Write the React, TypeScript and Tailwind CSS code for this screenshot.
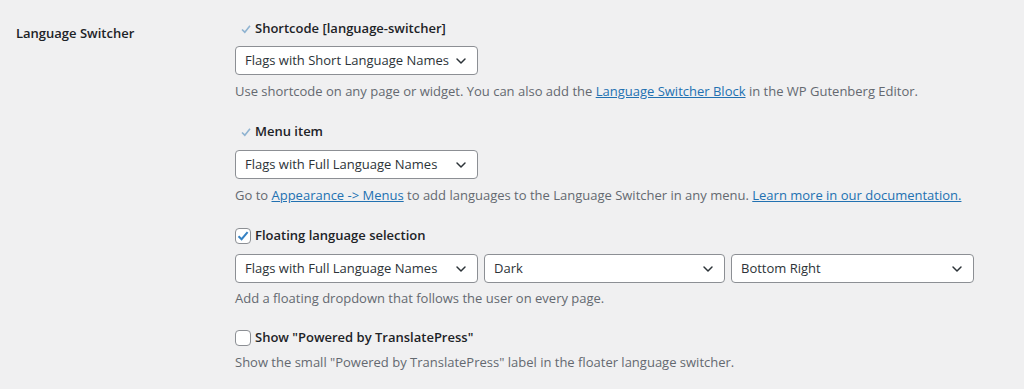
import { ChevronDown } from 'lucide-react';

function Select({ value, width }: { value: string; width: string }) {
  return (
    <div
      className={`${width} h-[29px] bg-white border border-[#8c8f94] rounded-[4px] flex items-center justify-between pl-[9px] pr-[8px] text-[13px] text-[#2c3338] whitespace-nowrap`}
    >
      <span>{value}</span>
      <ChevronDown className="w-4 h-4 text-[#2c3338] shrink-0" strokeWidth={2.2} />
    </div>
  );
}

function Tick() {
  return (
    <svg width="10" height="10" viewBox="0 0 10 10" className="mr-[4px]">
      <path d="M1 5.5 L3.8 8.2 L9 1.8" fill="none" stroke="#8fb3d1" strokeWidth="1.6" />
    </svg>
  );
}

function Checkbox({ checked }: { checked: boolean }) {
  return (
    <span className="w-[16px] h-[16px] mr-[4px] bg-white border border-[#8c8f94] rounded-[4px] flex items-center justify-center">
      {checked && (
        <svg width="14" height="14" viewBox="0 0 14 14">
          <path d="M2.5 7.2 L5.6 10.2 L11.6 3.2" fill="none" stroke="#3582c4" strokeWidth="2" />
        </svg>
      )}
    </span>
  );
}

export default function App() {
  const desc = 'text-[13px] leading-[20px] text-[#646970]';
  const title = 'flex items-center h-[20px] text-[13px] font-semibold text-[#1d2327]';
  const link = 'text-[#2271b1] underline';

  return (
    <div
      className="w-[1024px] h-[389px] bg-[#f0f0f1] flex"
      style={{ fontFamily: '"Open Sans", "Noto Sans", sans-serif' }}
    >
      {/* Label column */}
      <div className="w-[235px] pl-[16px] pt-[23px]">
        <div className="text-[13px] leading-[20px] font-semibold text-[#1d2327]">Language Switcher</div>
      </div>

      {/* Options */}
      <div className="flex-1 pt-[19px]">
        <div className={`${title} pl-[6px]`}>
          <Tick />
          Shortcode [language-switcher]
        </div>
        <div className="mt-[7px]">
          <Select value="Flags with Short Language Names" width="w-[243px]" />
        </div>
        <p className={`${desc} mt-[6px]`}>
          Use shortcode on any page or widget. You can also add the{' '}
          <a className={link}>Language Switcher Block</a> in the WP Gutenberg Editor.
        </p>

        <div className={`${title} pl-[6px] mt-[21px]`}>
          <Tick />
          Menu item
        </div>
        <div className="mt-[8px]">
          <Select value="Flags with Full Language Names" width="w-[243px]" />
        </div>
        <p className={`${desc} mt-[6px]`}>
          Go to <a className={link}>Appearance -&gt; Menus</a> to add languages to the Language Switcher in any menu.{' '}
          <a className={link}>Learn more in our documentation.</a>
        </p>

        <div className={`${title} mt-[21px]`}>
          <Checkbox checked />
          Floating language selection
        </div>
        <div className="mt-[8px] flex gap-[6px]">
          <Select value="Flags with Full Language Names" width="w-[243px]" />
          <Select value="Dark" width="w-[241px]" />
          <Select value="Bottom Right" width="w-[243px]" />
        </div>
        <p className={`${desc} mt-[5px]`}>Add a floating dropdown that follows the user on every page.</p>

        <div className={`${title} mt-[20px]`}>
          <Checkbox checked={false} />
          Show "Powered by TranslatePress"
        </div>
        <p className={`${desc} mt-[4px]`}>
          Show the small "Powered by TranslatePress" label in the floater language switcher.
        </p>
      </div>
    </div>
  );
}
